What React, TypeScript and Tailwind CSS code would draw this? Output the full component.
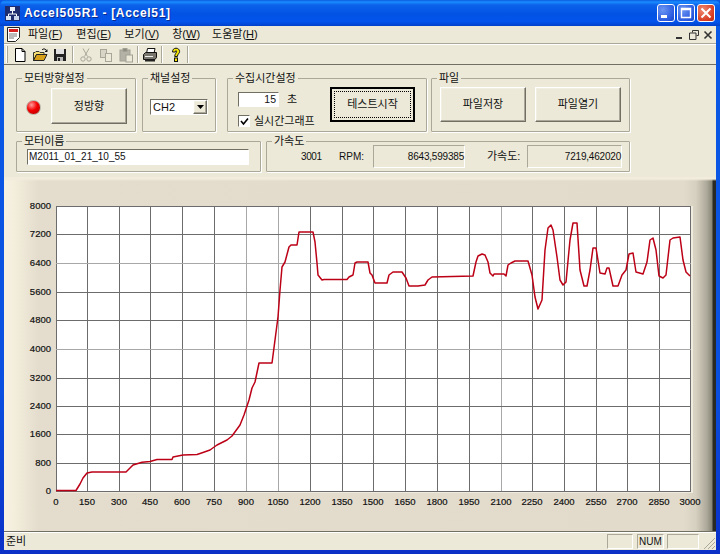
const CURVE =
  "56,490.5 76,490.5 80,484 83,478 87,473 92,472 126,472 130,468 133,465 142,462.3 150,461.5 157,459.5 172,459.5 173,457 183,455 197,454.5 203,452.5 210,450 217,445 227,440 232,436 240,425 244,415 249,400 252,388 255,382 259,363 272,363 275,340 278,317 280,290 282,267 285,262 289,247 291,245 297,245 299,232 301,232 313,232 315,242 317,263 318,275 322,280 324,279.5 347,279.5 349,277 353,275 355,263 357,262 368,262 370,273 372,275 375,283 387,283 389,275 393,272 402,272 406,278 409,286 418,286 425,285 428,280 432,277 473,276 476,262 478,256 482,254 485,255 488,262 490,273 493,276 494,274 504,274 506,276 508,265 511,263 515,261 528,261 532,275 535,297 538,309 542,300 545,250 548,228 551,225 553,230 557,257 560,280 563,285 566,282 570,240 573,223 577,223 580,270 584,286 587,286 590,270 593,248 596,248 600,273 605,274 607,268 609,268 613,286 618,286 622,275 626,270 629,254 633,253 636,272 643,274 647,262 650,240 653,238 656,250 659,276 663,278 666,275 670,240 673,238 680,237 683,260 686,272 690,276";

const X_TICKS = [
  [0, 56], [150, 87], [300, 119], [450, 150], [600, 182], [750, 214], [900, 246], [1050, 278],
  [1200, 310], [1350, 342], [1500, 373], [1650, 405], [1800, 437], [1950, 469], [2100, 501],
  [2250, 532], [2400, 564], [2550, 596], [2700, 627], [2850, 659], [3000, 690],
];
const Y_TICKS = [
  [8000, 206], [7200, 234], [6400, 263], [5600, 292], [4800, 320], [4000, 349],
  [3200, 378], [2400, 406], [1600, 434], [800, 463], [0, 491],
];
const LIGHT_X = [246, 278, 501];
const LIGHT_Y = [263, 349];

const raised =
  "border border-t-white border-l-white border-r-[#716f64] border-b-[#716f64] bg-[#ece9d8] shadow-[inset_-1px_-1px_0_#aca899,inset_1px_1px_0_#f1efe2]";
const sunken = "border border-t-[#716f64] border-l-[#716f64] border-r-white border-b-white";

function Group({ title, className, inner, children }: { title: string; className: string; inner: string; children: React.ReactNode }) {
  return (
    <fieldset className={`border border-[#aca899] rounded-[1px] shadow-[1px_1px_0_#fff] ${className}`}>
      <legend className="ml-[5px] px-[2px] leading-[14px] text-[#111]">{title}</legend>
      <div className={inner}>{children}</div>
    </fieldset>
  );
}

function Menu({ label, hot, gap }: { label: string; hot: string; gap: string }) {
  return (
    <span className={`${gap} whitespace-nowrap`}>
      {label}(<span className="underline">{hot}</span>)
    </span>
  );
}

function Slot({ children }: { children: React.ReactNode }) {
  return <div className="w-[20px] h-[16px] flex items-center justify-center">{children}</div>;
}

function Sep({ className }: { className: string }) {
  return <div className={`w-[2px] h-[17px] border-l border-[#aca899] border-r-white border-r ${className}`} />;
}

function AppIcon() {
  return (
    <svg width="15" height="15" viewBox="0 0 15 15">
      <rect x="0" y="0" width="15" height="15" fill="#1c2c6e" />
      <rect x="5" y="1" width="5" height="4" fill="#e8eef8" />
      <rect x="1" y="10" width="5" height="4" fill="#d8e4f4" />
      <rect x="9" y="10" width="5" height="4" fill="#c8d4ec" />
      <path d="M7.5 5V8M3.5 10V8H11.5V10" stroke="#fff" fill="none" />
    </svg>
  );
}

function DocIcon() {
  return (
    <svg width="15" height="15" viewBox="0 0 15 15">
      <path d="M1.5.5H13.5V10.5L9.5 14.5H1.5Z" fill="#fff" stroke="#222" />
      <rect x="3" y="2" width="9" height="3" fill="#d82020" />
      <path d="M3 7H11M3 9H11M3 11H8" stroke="#777" />
    </svg>
  );
}

function NewIcon() {
  return (
    <svg width="16" height="16" viewBox="0 0 16 16">
      <path d="M3.5 1.5H10L13 4.5V14.5H3.5Z" fill="#fff" stroke="#000" />
      <path d="M10 1.5V4.5H13" fill="none" stroke="#000" />
    </svg>
  );
}

function OpenIcon() {
  return (
    <svg width="16" height="16" viewBox="0 0 16 16">
      <path d="M1.5 5.5H3L4 4.5H7L8 5.5H12V7.5H4.5L1.5 13.5Z" fill="#f8e070" stroke="#333" />
      <path d="M1.5 13.5L4.5 7.5H15L12 13.5Z" fill="#d8a018" stroke="#222" />
      <path d="M10 3C11 1.5 13 1.5 14 3L15 4.5M15 2.5V4.5H13" fill="none" stroke="#111" />
    </svg>
  );
}

function SaveIcon() {
  return (
    <svg width="16" height="16" viewBox="0 0 16 16">
      <rect x="2" y="2" width="12" height="12" fill="#222" />
      <rect x="4" y="2" width="8" height="5" fill="#e0e0e0" />
      <rect x="5" y="10" width="6" height="4" fill="#b8b8b8" />
      <rect x="6" y="11" width="2" height="3" fill="#222" />
    </svg>
  );
}

function CutIcon() {
  return (
    <svg width="16" height="16" viewBox="0 0 16 16" fill="none" stroke="#a8a699">
      <path d="M5 1.5L9.5 9.5M11 1.5L6.5 9.5" />
      <circle cx="5" cy="12" r="2.2" />
      <circle cx="11" cy="12" r="2.2" />
    </svg>
  );
}

function CopyIcon() {
  return (
    <svg width="16" height="16" viewBox="0 0 16 16" fill="#d8d5c6" stroke="#a8a699">
      <rect x="2.5" y="2.5" width="6" height="8" />
      <rect x="7.5" y="6.5" width="6" height="8" fill="#ece9d8" />
    </svg>
  );
}

function PasteIcon() {
  return (
    <svg width="16" height="16" viewBox="0 0 16 16" stroke="#a0a093">
      <rect x="2" y="3" width="10" height="11" fill="#b4b2a6" />
      <rect x="5" y="1.5" width="4" height="3" fill="#8e8c80" />
      <rect x="8" y="8" width="6.5" height="7" fill="#ece9d8" />
    </svg>
  );
}

function PrintIcon() {
  return (
    <svg width="16" height="16" viewBox="0 0 16 16" stroke="#111">
      <path d="M5.5 1.5H13L12 6.5H4.5Z" fill="#fff" />
      <path d="M1.5 7.5L3.5 5.5H14.5V10.5L13 12.5H1.5Z" fill="#77756c" />
      <path d="M3 13.5H13" stroke="#222" strokeWidth="2" />
      <path d="M3 9.5H11" stroke="#eee" />
    </svg>
  );
}

function HelpIcon() {
  return (
    <svg width="16" height="16" viewBox="0 0 16 16">
      <path
        d="M4.5 5C4.5 2.5 6 1.2 8 1.2S11.6 2.5 11.6 4.6C11.6 6.5 9.4 7 9.4 9.5H6.7C6.7 6.8 8.6 6 8.6 4.6 8.6 4 8.3 3.6 8 3.6 7.6 3.6 7.4 4 7.4 5Z"
        fill="#f8e800"
        stroke="#111"
      />
      <rect x="6.5" y="11" width="3" height="3.5" fill="#f8e800" stroke="#111" />
    </svg>
  );
}

function TitleButton({ kind }: { kind: "min" | "max" | "close" }) {
  const bg =
    kind === "close"
      ? "bg-[radial-gradient(circle_at_30%_30%,#ee8a70,#d83c22_70%,#b82c14)]"
      : "bg-[radial-gradient(circle_at_30%_30%,#6c96f2,#2a5ae0_70%,#1c48c8)]";
  return (
    <div className={`w-[18px] h-[18px] rounded-[3px] border border-white flex items-center justify-center ${bg}`}>
      {kind === "min" && (
        <svg width="16" height="16" viewBox="0 0 16 16"><rect x="3" y="10" width="6" height="3" fill="#fff" /></svg>
      )}
      {kind === "max" && (
        <svg width="16" height="16" viewBox="0 0 16 16"><path d="M3.5 3.5H12.5V12.5H3.5Z M3.5 4.5H12.5" fill="none" stroke="#fff" strokeWidth="1.4" /></svg>
      )}
      {kind === "close" && (
        <svg width="16" height="16" viewBox="0 0 16 16"><path d="M3.5 3.5L12.5 12.5M12.5 3.5L3.5 12.5" stroke="#fff" strokeWidth="2" /></svg>
      )}
    </div>
  );
}

function Chart() {
  return (
    <svg viewBox="4 177 712 354" width="712" height="354" className="block">
      <rect x="56" y="206" width="637" height="287" fill="#efebdf" />
      <rect x="56" y="206" width="635" height="285" fill="#fff" />
      {X_TICKS.map(([v, x]) => (
        <line key={v} x1={x + 0.5} x2={x + 0.5} y1="206" y2="491" stroke={LIGHT_X.includes(x) ? "#a8a8a8" : "#6c6c6c"} />
      ))}
      {Y_TICKS.map(([v, y]) => (
        <line key={v} x1="56" x2="691" y1={y + 0.5} y2={y + 0.5} stroke={LIGHT_Y.includes(y) ? "#a8a8a8" : "#6c6c6c"} />
      ))}
      <polyline points={CURVE} fill="none" stroke="#bc0016" strokeWidth="1.5" strokeLinejoin="round" />
      {X_TICKS.map(([v, x]) => (
        <text key={v} x={x} y="505" textAnchor="middle" fontSize="9.5" fill="#111" stroke="#111" strokeWidth="0.2">{v}</text>
      ))}
      {Y_TICKS.map(([v, y]) => (
        <text key={v} x="51" y={y + 3} textAnchor="end" fontSize="9.5" fill="#111" stroke="#111" strokeWidth="0.2">{v}</text>
      ))}
    </svg>
  );
}

export default function App() {
  return (
    <div className="w-[720px] h-[554px] overflow-hidden flex flex-col bg-[linear-gradient(180deg,#0a5ae6,#0a50e0_70%,#0a30c8)] text-[11px] text-[#111] [font-family:'Liberation_Sans','Noto_Sans_CJK_KR',sans-serif]">
      {/* title bar */}
      <div className="h-[26px] shrink-0 flex items-center pl-[5px] pr-[5px] rounded-t-[6px] bg-[linear-gradient(180deg,#0a5ce0_0,#1a8cff_2px,#0c62ea_5px,#0252e4_14px,#0254ec_22px,#0240c8_26px)]">
        <AppIcon />
        <span className="ml-[4px] text-white text-[12px] font-bold tracking-[0.7px] [text-shadow:1px_1px_0_#0a2a90]">
          Accel505R1 - [Accel51]
        </span>
        <div className="ml-auto flex gap-[2px]">
          <TitleButton kind="min" />
          <TitleButton kind="max" />
          <TitleButton kind="close" />
        </div>
      </div>

      <div className="flex-1 mx-[4px] mb-[4px] flex flex-col bg-[#ece9d8] min-h-0">
        {/* menu */}
        <div className="h-[18px] shrink-0 flex items-center border-b border-[#aca899] pl-[2px] pr-[1px]">
          <DocIcon />
          <Menu label="파일" hot="F" gap="ml-[7px]" />
          <Menu label="편집" hot="E" gap="ml-[14px]" />
          <Menu label="보기" hot="V" gap="ml-[13px]" />
          <Menu label="창" hot="W" gap="ml-[13px]" />
          <Menu label="도움말" hot="H" gap="ml-[12px]" />
          <div className="ml-auto flex items-center">
            <div className="w-[14px] h-[14px] flex items-center justify-center">
              <svg width="10" height="10" viewBox="0 0 10 10"><rect x="1" y="7" width="6" height="2" fill="#333" /></svg>
            </div>
            <div className="w-[14px] h-[14px] flex items-center justify-center">
              <svg width="10" height="10" viewBox="0 0 10 10" fill="none" stroke="#333"><path d="M3.5 2.5V.5H9.5V5.5H7.5" /><path d="M.5 3H7V9.5H.5Z" /></svg>
            </div>
            <div className="w-[14px] h-[14px] flex items-center justify-center">
              <svg width="10" height="10" viewBox="0 0 10 10" stroke="#333" strokeWidth="1.6"><path d="M1.5 1.5L8.5 8.5M8.5 1.5L1.5 8.5" /></svg>
            </div>
          </div>
        </div>

        {/* toolbar */}
        <div className="h-[21px] shrink-0 flex items-center border-t border-white border-b border-b-[#716f64] pl-[2px]">
          <div className="w-[2px] h-[17px] bg-[#aca899] border-l border-white mr-[2px]" />
          <Slot><NewIcon /></Slot>
          <Slot><OpenIcon /></Slot>
          <Slot><SaveIcon /></Slot>
          <Sep className="mx-[2px]" />
          <Slot><CutIcon /></Slot>
          <Slot><CopyIcon /></Slot>
          <Slot><PasteIcon /></Slot>
          <Sep className="mx-[1px]" />
          <Slot><PrintIcon /></Slot>
          <Sep className="ml-[1px] mr-[3px]" />
          <Slot><HelpIcon /></Slot>
          <Sep className="ml-[1px]" />
        </div>

        {/* control panel */}
        <div className="h-[112px] shrink-0 pt-[6px] pl-[12px]">
          <div className="flex h-[61px]">
            <Group title="모터방향설정" className="w-[120px] h-[61px]" inner="flex items-start pt-[3px] pl-[9px]">
              <div className="mt-[12px] w-[15px] h-[15px] rounded-full border border-[#b8b6a8] bg-[radial-gradient(circle_at_35%_30%,#ff9c9c_0,#f40000_45%,#a80000_100%)]" />
              <button className={`ml-[10px] w-[76px] h-[36px] ${raised}`}>정방향</button>
            </Group>
            <Group title="채널설정" className="ml-[6px] w-[74px] h-[61px]" inner="pt-[14px] pl-[7px]">
              <div className={`w-[58px] h-[16px] bg-white flex items-center ${sunken}`}>
                <span className="pl-[2px] text-[11px] leading-none">CH2</span>
                <div className={`ml-auto w-[14px] h-[14px] flex items-center justify-center ${raised}`}>
                  <svg width="7" height="4" viewBox="0 0 7 4"><path d="M0 0H7L3.5 4Z" fill="#000" /></svg>
                </div>
              </div>
            </Group>
            <Group title="수집시간설정" className="ml-[11px] w-[200px] h-[61px]" inner="flex items-start pt-[2px] pl-[10px]">
              <div className="w-[80px] pt-[5px]">
                <div className="flex items-center h-[15px]">
                  <div className={`w-[41px] h-[15px] bg-white text-right pr-[2px] leading-[13px] text-[10.5px] ${sunken}`}>15</div>
                  <span className="ml-[8px]">초</span>
                </div>
                <div className="flex items-center mt-[6px] whitespace-nowrap">
                  <div className={`w-[12px] h-[12px] bg-white flex items-center justify-center ${sunken}`}>
                    <svg width="9" height="9" viewBox="0 0 9 9"><path d="M1 4L3.5 7L8 1.5" fill="none" stroke="#000" strokeWidth="1.6" /></svg>
                  </div>
                  <span className="ml-[4px]">실시간그래프</span>
                </div>
              </div>
              <button className="ml-[12px] w-[85px] h-[35px] border-2 border-black bg-[#ece9d8] p-[2px]">
                <span className="flex h-full items-center justify-center border border-dotted border-black">테스트시작</span>
              </button>
            </Group>
            <Group title="파일" className="ml-[4px] w-[199px] h-[61px]" inner="flex items-start pt-[2px] pl-[8px]">
              <button className={`w-[86px] h-[35px] ${raised}`}>파일저장</button>
              <button className={`ml-[9px] w-[86px] h-[35px] ${raised}`}>파일열기</button>
            </Group>
          </div>
          <div className="flex h-[38px] mt-[2px]">
            <Group title="모터이름" className="w-[245px] h-[38px]" inner="pt-[1px] pl-[10px]">
              <div className={`w-[222px] h-[16px] bg-white pl-[1px] text-[10px] leading-[14px] ${sunken}`}>M2011_01_21_10_55</div>
            </Group>
            <Group title="가속도" className="ml-[5px] w-[364px] h-[38px]" inner="flex items-center h-[23px] -mt-[3px] text-[10px]">
              <span className="ml-[34px] w-[38px] tracking-[-0.4px]">3001</span>
              <span className="w-[34px]">RPM:</span>
              <div className="w-[92px] h-[23px] border border-t-[#aca899] border-l-[#aca899] border-r-white border-b-white text-right leading-[21px] tracking-[-0.2px]">8643,599385</div>
              <span className="ml-[22px] w-[40px] text-[11px]">가속도:</span>
              <div className="w-[95px] h-[23px] border border-t-[#aca899] border-l-[#aca899] border-r-white border-b-white text-right leading-[21px] tracking-[-0.2px]">7219,462020</div>
            </Group>
          </div>
        </div>

        {/* chart */}
        <div className="h-[356px] shrink-0 border-b-2 border-b-white bg-[linear-gradient(180deg,#f1ecdc_0,#f1ecdc_2px,transparent_4px),linear-gradient(90deg,#f7f1e2_0,#f4eedd_10px,#e4ddcd_34px,#e2dbcb_680px,#d6d0c0_692px,#aca899_703px,#8a8676_708px,#2a2a24_709px,#2a2a24_712px)]">
          <div className="border-b border-[#716f64]">
            <Chart />
          </div>
        </div>

        {/* status bar */}
        <div className="h-[17px] shrink-0 flex items-center pl-[2px]">
          <span>준비</span>
          <div className="ml-auto flex items-center">
            <div className={`w-[26px] h-[15px] ${sunken} border-t-[#aca899] border-l-[#aca899]`} />
            <div className={`ml-[4px] w-[27px] h-[15px] ${sunken} border-t-[#aca899] border-l-[#aca899] text-[10px] leading-[13px] text-center`}>NUM</div>
            <div className={`ml-[3px] w-[32px] h-[15px] ${sunken} border-t-[#aca899] border-l-[#aca899]`} />
            <svg width="17" height="15" viewBox="0 0 17 15" stroke="#aca899">
              <path d="M5 15L16 4M9 15L16 8M13 15L16 12" />
            </svg>
          </div>
        </div>
      </div>
    </div>
  );
}
